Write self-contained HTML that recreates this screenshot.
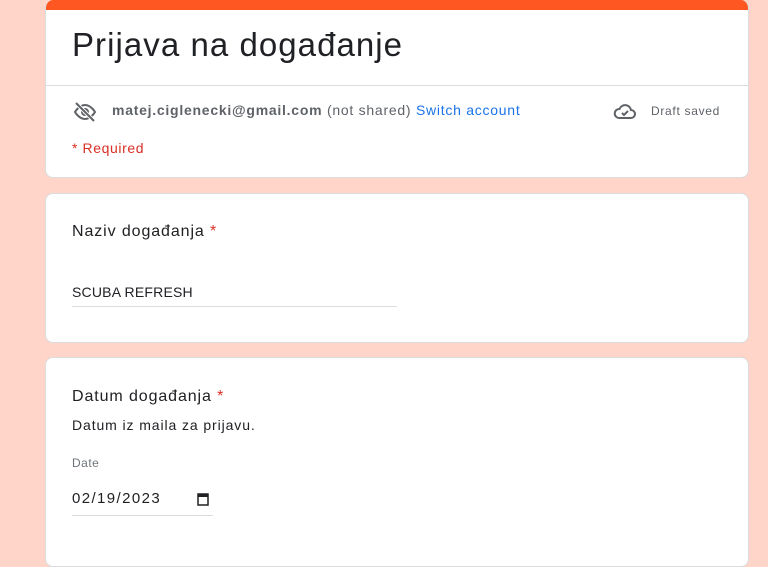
<!DOCTYPE html>
<html><head><meta charset="utf-8"><style>
*{margin:0;padding:0;box-sizing:border-box}
body{width:768px;height:549px;background:#fed5c8;font-family:"Liberation Sans",Arial,sans-serif;position:relative;overflow:hidden;color:#202124}
.card{position:absolute;left:45px;width:704px;background:#fff;border:1px solid #dadce0;border-radius:8px;overflow:hidden}
.a{position:absolute;white-space:nowrap}
</style></head><body>
<div class="card" style="top:0;height:178px;border-top:none">
  <div style="height:10px;background:#ff5722"></div>
  <div class="a" style="left:26px;top:26px;font-size:33px;letter-spacing:1.05px">Prijava na događanje</div>
  <div style="position:absolute;left:0;right:0;top:85px;border-top:1px solid #dadce0"></div>
  <svg class="a" style="left:27px;top:100px" width="24" height="24" viewBox="0 0 24 24" fill="none" stroke="#5f6368" stroke-width="2"><path d="M2 12s4-7 10-7 10 7 10 7-4 7-10 7S2 12 2 12z"/><circle cx="12" cy="12" r="3"/><path d="M3 3l18 18" stroke="#fff" stroke-width="4"/><path d="M3 3l18 18"/></svg>
  <div class="a" style="left:66px;top:102px;font-size:14px;letter-spacing:0.74px;color:#5f6368"><b>matej.ciglenecki@gmail.com</b> (not shared) <span style="color:#1a73e8">Switch account</span></div>
  <svg class="a" style="left:567px;top:101px" width="24" height="20" viewBox="0 0 24 20" fill="none" stroke="#5f6368" stroke-width="2"><path d="M6 17h12a4 4 0 0 0 0-8 6 6 0 0 0-11.5-1A4.5 4.5 0 0 0 6 17z"/><path d="M9 12l2 2 4-4"/></svg>
  <div class="a" style="left:605px;top:104px;font-size:12px;letter-spacing:0.7px;color:#5f6368">Draft saved</div>
  <div class="a" style="left:26px;top:140px;font-size:14px;letter-spacing:0.6px;color:#d93025">* Required</div>
</div>
<div class="card" style="top:193px;height:150px">
  <div class="a" style="left:26px;top:29px;font-size:16px;letter-spacing:0.9px">Naziv događanja <span style="color:#d93025">*</span></div>
  <div class="a" style="left:26px;top:90px;font-size:14px;letter-spacing:0.2px">SCUBA REFRESH</div>
  <div style="position:absolute;left:26px;top:112px;width:325px;border-top:1px solid #dadce0"></div>
</div>
<div class="card" style="top:357px;height:210px">
  <div class="a" style="left:26px;top:30px;font-size:16px;letter-spacing:0.9px">Datum događanja <span style="color:#d93025">*</span></div>
  <div class="a" style="left:26px;top:59px;font-size:14px;letter-spacing:0.9px">Datum iz maila za prijavu.</div>
  <div class="a" style="left:26px;top:98px;font-size:12px;letter-spacing:0.5px;color:#70757a">Date</div>
  <div class="a" style="left:26px;top:132px;font-size:15px;letter-spacing:1.4px">02/19/2023</div>
  <svg class="a" style="left:151px;top:134px" width="12" height="14" viewBox="0 0 12 14"><rect x="1" y="2" width="10" height="11" fill="none" stroke="#202124" stroke-width="1.5"/><rect x="1" y="2" width="10" height="3" fill="#202124"/></svg>
  <div style="position:absolute;left:26px;top:157px;width:141px;border-top:1px solid #dadce0"></div>
</div>
</body></html>
